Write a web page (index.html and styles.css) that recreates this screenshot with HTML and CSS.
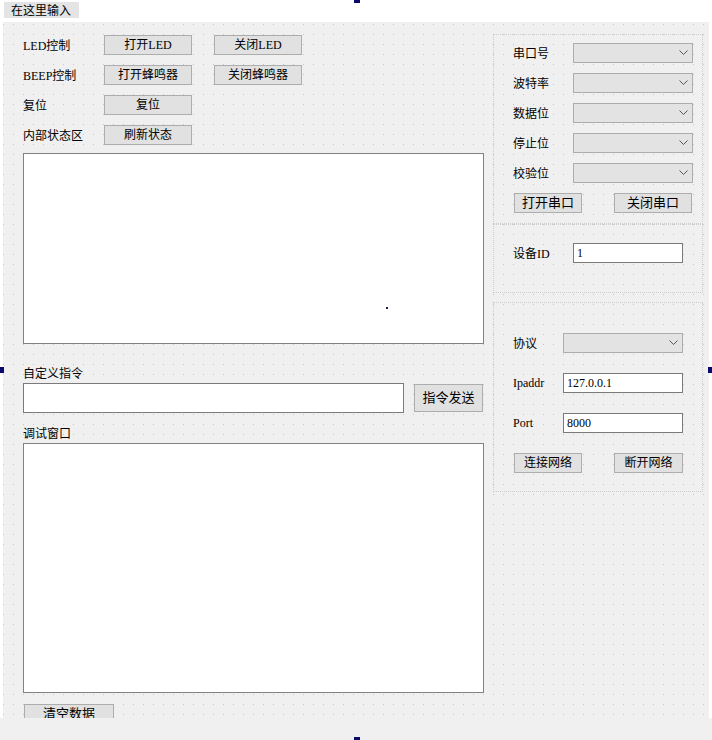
FILE: index.html
```html
<!DOCTYPE html>
<html lang="zh">
<head>
    <meta charset="UTF-8" />
    <meta name="viewport" content="width=device-width, initial-scale=1.0" />
    <title>Form</title>
    <link rel="stylesheet" href="styles.css">
</head>
<body>

<div class="menubar"><span class="menu-item">在这里输入</span></div>

<div class="form">
    <div class="left">
        <div class="ctrl-row">
            <span class="lbl">LED控制</span>
            <button class="btn">打开LED</button>
            <button class="btn">关闭LED</button>
        </div>
        <div class="ctrl-row">
            <span class="lbl">BEEP控制</span>
            <button class="btn">打开蜂鸣器</button>
            <button class="btn">关闭蜂鸣器</button>
        </div>
        <div class="ctrl-row">
            <span class="lbl">复位</span>
            <button class="btn">复位</button>
        </div>
        <div class="ctrl-row">
            <span class="lbl">内部状态区</span>
            <button class="btn">刷新状态</button>
        </div>

        <div class="textbox status-box"><span class="caret-dot"></span></div>

        <div class="field-label first">自定义指令</div>
        <div class="cmd-row">
            <div class="lineedit cmd-input"></div>
            <button class="btn send-btn">指令发送</button>
        </div>

        <div class="field-label">调试窗口</div>
        <div class="textbox debug-box"></div>

        <button class="btn clear-btn">清空数据</button>
    </div>

    <div class="right">
        <div class="group serial">
            <div class="form-row"><span class="rlbl">串口号</span><div class="combo"><svg width="9" height="6" viewBox="0 0 9 6"><polyline points="0.5,0.5 4.5,4.5 8.5,0.5" fill="none" stroke="#555" stroke-width="1"/></svg></div></div>
            <div class="form-row"><span class="rlbl">波特率</span><div class="combo"><svg width="9" height="6" viewBox="0 0 9 6"><polyline points="0.5,0.5 4.5,4.5 8.5,0.5" fill="none" stroke="#555" stroke-width="1"/></svg></div></div>
            <div class="form-row"><span class="rlbl">数据位</span><div class="combo"><svg width="9" height="6" viewBox="0 0 9 6"><polyline points="0.5,0.5 4.5,4.5 8.5,0.5" fill="none" stroke="#555" stroke-width="1"/></svg></div></div>
            <div class="form-row"><span class="rlbl">停止位</span><div class="combo"><svg width="9" height="6" viewBox="0 0 9 6"><polyline points="0.5,0.5 4.5,4.5 8.5,0.5" fill="none" stroke="#555" stroke-width="1"/></svg></div></div>
            <div class="form-row"><span class="rlbl">校验位</span><div class="combo"><svg width="9" height="6" viewBox="0 0 9 6"><polyline points="0.5,0.5 4.5,4.5 8.5,0.5" fill="none" stroke="#555" stroke-width="1"/></svg></div></div>
            <div class="btn-row">
                <button class="btn big open-btn">打开串口</button>
                <button class="btn big close-btn">关闭串口</button>
            </div>
        </div>

        <div class="group device">
            <div class="form-row"><span class="rlbl">设备ID</span><div class="lineedit id-input">1</div></div>
        </div>

        <div class="group net">
            <div class="form-row"><span class="rlbl narrow">协议</span><div class="combo"><svg width="9" height="6" viewBox="0 0 9 6"><polyline points="0.5,0.5 4.5,4.5 8.5,0.5" fill="none" stroke="#555" stroke-width="1"/></svg></div></div>
            <div class="form-row"><span class="rlbl narrow">Ipaddr</span><div class="lineedit net-input">127.0.0.1</div></div>
            <div class="form-row"><span class="rlbl narrow">Port</span><div class="lineedit net-input">8000</div></div>
            <div class="btn-row">
                <button class="btn open-btn">连接网络</button>
                <button class="btn close-btn short">断开网络</button>
            </div>
        </div>
    </div>
</div>

<div class="footer"></div>

<span class="handle h-top"></span>
<span class="handle h-left"></span>
<span class="handle h-right"></span>
<span class="handle h-bottom"></span>

</body>
</html>
```

FILE: styles.css
```css
body {
    margin: 0;
    padding: 0;
    width: 712px;
    height: 740px;
    overflow: hidden;
    position: relative;
    background-color: #ffffff;
    font-family: "Liberation Serif", "Noto Sans CJK SC", serif;
    font-size: 12px;
    color: #000;
}

.menubar {
    height: 22px;
    background-color: #ffffff;
}

.menu-item {
    display: inline-block;
    margin: 2px 0 0 4px;
    height: 16px;
    line-height: 16px;
    padding: 0 8px 0 7px;
    background-color: #e4e4e4;
    font-family: "Noto Sans CJK SC", sans-serif;
    font-size: 12px;
}

.form {
    display: flex;
    margin-left: 3px;
    width: 706px;
    height: 696px;
    padding-left: 20px;
    box-sizing: border-box;
    overflow: hidden;
    background-color: #f0f0f0;
    background-image:
        linear-gradient(to right, #f0f0f0 9px, transparent 9px),
        linear-gradient(to bottom, #f0f0f0 9px, #c6c6c6 9px);
    background-size: 10px 10px;
    background-position: 1px 3px;
}

.footer {
    height: 22px;
    background-color: #f0f0f0;
}

/* left side */
.left {
    width: 461px;
    padding-top: 13px;
    display: flex;
    flex-direction: column;
}

.left > * {
    flex-shrink: 0;
}

.ctrl-row {
    display: grid;
    grid-template-columns: 81px 88px 110px;
    height: 20px;
    align-items: center;
    margin-bottom: 10px;
}

.ctrl-row .btn {
    width: 88px;
}

.ctrl-row .btn:nth-child(3) {
    margin-left: 22px;
}

.ctrl-row:nth-child(4) {
    margin-bottom: 0;
}

.lbl {
    white-space: nowrap;
}

.btn {
    height: 20px;
    padding: 0;
    border: 1px solid #adadad;
    background-color: #e1e1e1;
    font-family: "Liberation Serif", "Noto Sans CJK SC", serif;
    font-size: 12px;
    color: #000;
    line-height: 18px;
}

.btn.big {
    font-size: 13px;
}

.textbox {
    background-color: #ffffff;
    border: 1px solid #828282;
    box-sizing: border-box;
}

.status-box {
    margin-top: 8px;
    height: 191px;
    position: relative;
}

.caret-dot {
    position: absolute;
    left: 362px;
    top: 153px;
    width: 2px;
    height: 2px;
    background-color: #1a1a60;
}

.field-label {
    height: 14px;
    line-height: 14px;
    margin-top: 13px;
    margin-bottom: 3px;
    font-family: "Noto Sans CJK SC", sans-serif;
}

.field-label.first {
    margin-top: 22px;
}

.cmd-row {
    display: flex;
    align-items: center;
    gap: 10px;
    height: 30px;
}

.lineedit {
    background-color: #ffffff;
    border: 1px solid #7a7a7a;
    box-sizing: border-box;
    padding-left: 2px;
    line-height: 18px;
}

.cmd-input {
    width: 381px;
    height: 30px;
}

.send-btn {
    width: 69px;
    height: 28px;
    font-size: 13px;
}

.debug-box {
    height: 250px;
}

.clear-btn {
    margin-top: 11px;
    margin-left: 1px;
    width: 90px;
    height: 20px;
    font-size: 13px;
    align-self: flex-start;
}

/* right side */
.right {
    width: 210px;
    margin-left: 9px;
}

.group {
    border: 1px dotted #cdcdcd;
    box-sizing: border-box;
    padding-left: 19px;
}

.serial {
    margin-top: 12px;
    height: 190px;
    padding-top: 8px;
}

.device {
    height: 69px;
    padding-top: 18px;
}

.net {
    margin-top: 9px;
    height: 190px;
    padding-top: 30px;
}

.form-row {
    display: flex;
    align-items: center;
    height: 20px;
    margin-bottom: 10px;
}

.net .form-row {
    margin-bottom: 20px;
}

.rlbl {
    width: 60px;
    white-space: nowrap;
}

.rlbl.narrow {
    width: 50px;
}

.combo {
    width: 120px;
    height: 20px;
    box-sizing: border-box;
    border: 1px solid #acacac;
    background-color: #e3e3e3;
    display: flex;
    align-items: center;
    justify-content: flex-end;
    padding-right: 4px;
}

.id-input, .net-input {
    width: 110px;
    height: 20px;
    padding-left: 3px;
}

.net-input {
    width: 120px;
}

.btn-row {
    display: flex;
    margin-top: 1px;
}

.open-btn {
    width: 68px;
    margin-left: 1px;
}

.close-btn {
    width: 78px;
    margin-left: 32px;
}

.close-btn.short {
    width: 69px;
}

/* selection handles */
.handle {
    position: absolute;
    background-color: #0a0a6e;
}

.h-top {
    left: 354px;
    top: 0;
    width: 6px;
    height: 3px;
}

.h-left {
    left: 0;
    top: 367px;
    width: 4px;
    height: 6px;
}

.h-right {
    left: 708px;
    top: 367px;
    width: 4px;
    height: 6px;
}

.h-bottom {
    left: 354px;
    top: 737px;
    width: 6px;
    height: 3px;
}
```
